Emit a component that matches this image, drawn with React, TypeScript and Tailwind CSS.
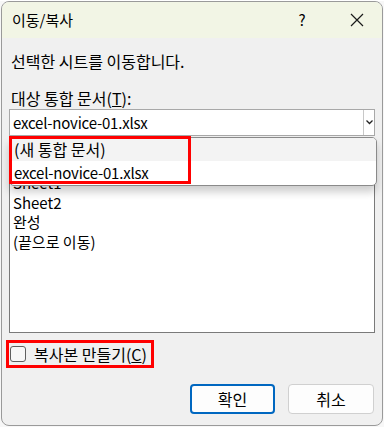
import React from "react";

const font = { fontFamily: '"Segoe UI", "Noto Sans CJK KR", "Liberation Sans", sans-serif' };

export default function App() {
  return (
    <div className="w-[384px] h-[427px] bg-[#f7f7f7] text-[15px] text-black" style={font}>
      <div className="relative ml-[1px] mt-[1px] w-[382px] h-[425px] border border-[#9a9a9a] rounded-[8px] overflow-hidden bg-[#f0f0f0]">
        {/* title bar */}
        <div className="flex items-center h-[36px] bg-[#f2f5e5] pl-[10px]">
          <span className="flex-1">이동/복사</span>
          <span className="w-[20px] text-center mr-[38px]">?</span>
          <svg width="14" height="14" viewBox="0 0 14 14" className="mr-[18px]">
            <path d="M1 1 L13 13 M13 1 L1 13" stroke="#1a1a1a" strokeWidth="1.2" />
          </svg>
        </div>

        <div className="px-[7px]">
          <div className="pl-[2px] pt-[11px] h-[40px] text-[16px]">선택한 시트를 이동합니다.</div>
          <div className="pl-[2px] pt-[8px] h-[32px] text-[16px]">
            대상 통합 문서(<span className="underline">T</span>):
          </div>

          {/* combobox */}
          <div className="flex h-[27px] mt-[-1px] border border-[#a8a8a8] bg-white">
            <span className="flex-1 pl-[3px] leading-[25px] tracking-[-0.2px]">excel-novice-01.xlsx</span>
            <span className="flex items-center justify-center w-[11px] border-l border-[#c8c8c8]">
              <svg width="7" height="5" viewBox="0 0 7 5">
                <path d="M0.5 0.5 L3.5 3.5 L6.5 0.5" stroke="#222" strokeWidth="1.3" fill="none" />
              </svg>
            </span>
          </div>

          <div className="relative pt-[35px]">
            {/* sheet listbox */}
            <div className="h-[162px] border border-[#7a7a7a] bg-white pl-[3px] pt-[1px] leading-[19.5px]">
              <div>Sheet1</div>
              <div>Sheet2</div>
              <div>완성</div>
              <div>(끝으로 이동)</div>
            </div>

            {/* dropdown list */}
            <div className="absolute left-0 top-[1px] w-[368px] h-[49px] rounded-[5px] border border-[#8a8a8a] bg-white overflow-hidden shadow-[0_6px_8px_rgba(0,0,0,0.2)]">
              <div className="h-[23px] bg-[#f3f3f3] pl-[4px] leading-[23px] text-[16px]">(새 통합 문서)</div>
              <div className="h-[24px] pl-[4px] leading-[24px] tracking-[-0.2px]">excel-novice-01.xlsx</div>
            </div>
            <div className="absolute left-0 top-[0px] w-[182px] h-[48px] border-[3px] border-[#ff0000]" />
          </div>

          {/* copy checkbox */}
          <div className="mt-[7px] ml-[-3px] w-[148px] h-[28px] border-[3px] border-[#ff0000] flex items-center">
            <span className="ml-[1px] w-[16px] h-[16px] rounded-[3px] border border-[#5f5f5f] bg-[#f7f7f7]" />
            <span className="ml-[8px] text-[16px]">
              복사본 만들기(<span className="underline">C</span>)
            </span>
          </div>

          {/* buttons */}
          <div className="flex justify-end gap-[13px] mt-[16px] pr-[1px]">
            <button className="w-[85px] h-[30px] rounded-[4px] border-2 border-[#0067c0] bg-[#fdfdfd] text-[16px]">확인</button>
            <button className="w-[86px] h-[30px] rounded-[4px] border border-[#d0d0d0] bg-[#fdfdfd] text-[16px]">취소</button>
          </div>
        </div>
      </div>
    </div>
  );
}
